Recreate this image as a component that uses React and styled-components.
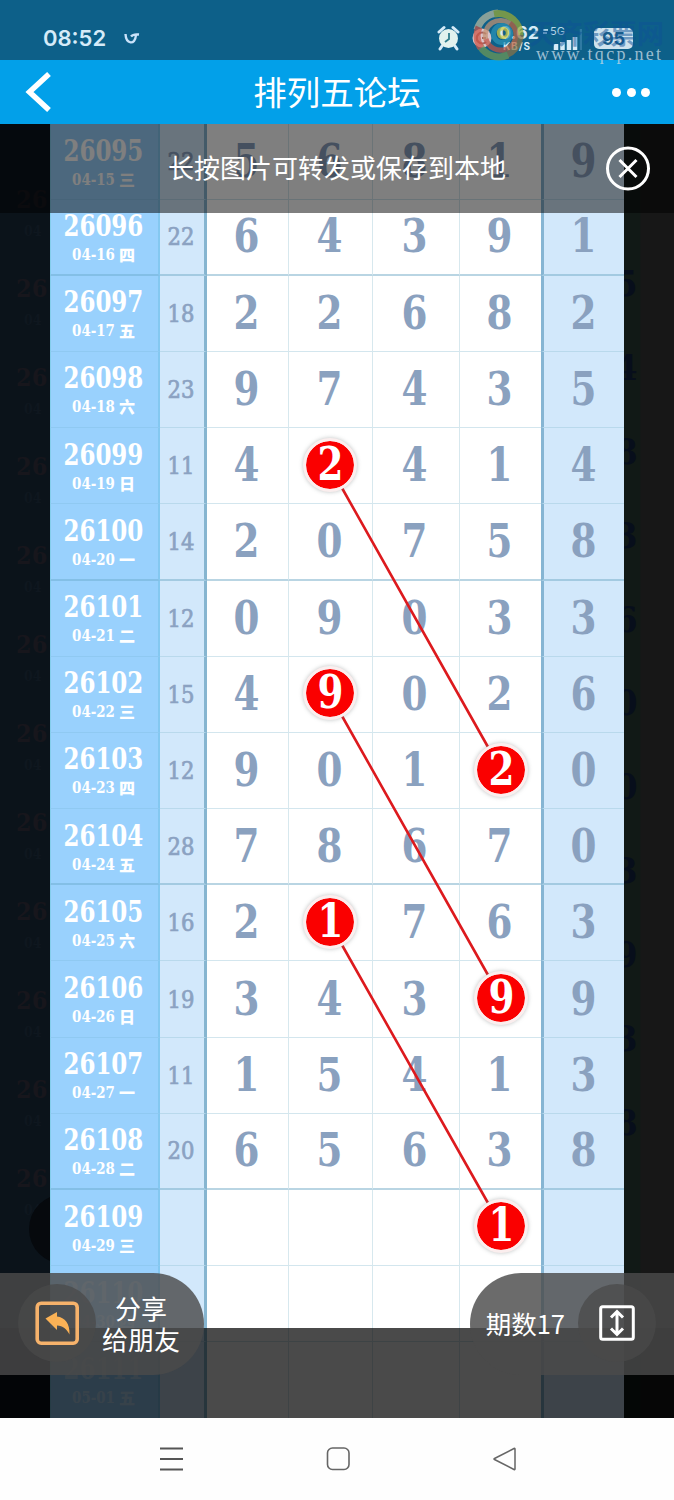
import React from "react";
import styled, { createGlobalStyle } from "styled-components";

const GlobalStyle = createGlobalStyle`
  * { box-sizing: border-box; }
  body { margin: 0; background: #fff; }
`;

const SERIF = `"DejaVu Serif Condensed", "DejaVu Serif", "Noto Sans CJK SC", serif`;
const SANS = `"Noto Sans", "Noto Sans CJK SC", sans-serif`;

const Phone = styled.div`
  width: 674px;
  height: 1500px;
  display: flex;
  flex-direction: column;
  position: relative;
  overflow: hidden;
  font-family: ${SANS};
`;

const StatusBar = styled.div`
  height: 60px;
  flex: none;
  display: flex;
  align-items: flex-end;
  justify-content: space-between;
  padding: 0 41px 7px 43px;
  background: #0d6089;
  color: #d5ebf8;
`;

const StatusGroup = styled.div`
  display: flex;
  align-items: center;
  gap: ${(p) => p.$gap}px;
  height: 30px;
`;

const Clock = styled.span`
  font: 600 22px/30px Inter, sans-serif;
`;

const CarrierIcon = styled.svg`
  margin-left: 3px;
`;

const NetSpeed = styled.div`
  width: 36px;
  text-align: center;
  font: 700 18px/16px Inter, sans-serif;
  small {
    display: block;
    font-size: 10px;
    line-height: 10px;
    letter-spacing: 1px;
  }
`;

const Battery = styled.div`
  width: 39px;
  height: 21px;
  margin-left: 5px;
  border-radius: 5px;
  background: #cfe3ee;
  color: #1b5f8c;
  font: 700 18px/21px Inter, sans-serif;
  text-align: center;
`;

const Watermark = styled.div`
  position: absolute;
  left: 472px;
  top: 8px;
  width: 202px;
  height: 56px;
`;

const WatermarkName = styled.div`
  position: absolute;
  left: 57px;
  top: 6px;
  font: 700 27px/38px "Noto Sans CJK SC", sans-serif;
  color: rgba(14, 82, 150, 0.5);
  white-space: nowrap;
`;

const WatermarkUrl = styled.div`
  position: absolute;
  left: 64px;
  top: 35px;
  font: 18px/22px "Liberation Serif", serif;
  letter-spacing: 2.3px;
  color: rgba(190, 214, 228, 0.8);
  white-space: nowrap;
`;

const Header = styled.header`
  height: 64px;
  flex: none;
  display: grid;
  grid-template-columns: 100px 1fr 100px;
  align-items: center;
  padding: 0 24px;
  background: #02a0e9;
  color: #fff;
`;

const Title = styled.h1`
  margin: 0;
  padding-bottom: 2px;
  text-align: center;
  font: 400 33.5px/60px "Noto Sans CJK SC", sans-serif;
`;

const Dots = styled.div`
  display: flex;
  justify-content: flex-end;
  gap: 5.5px;
  i {
    width: 9px;
    height: 9px;
    border-radius: 50%;
    background: #fff;
  }
`;

const Stage = styled.main`
  height: 1293.5px;
  flex: none;
  display: grid;
  grid-template-columns: 50px 574px 50px;
  position: relative;
  overflow: hidden;
  background: #000;
`;

const Backdrop = styled.div`
  background: ${(p) => p.$color};
  padding-top: ${(p) => p.$top}px;
  display: flex;
  flex-direction: column;
  overflow: hidden;
  font-family: ${SERIF};
  font-weight: 700;
  position: relative;
`;

const GhostPeriod = styled.div`
  height: 89px;
  flex: none;
  padding-left: 16px;
  font-size: 25px;
  line-height: 32px;
  color: #17161c;
  small {
    display: block;
    padding-left: 8px;
    font-size: 14px;
    line-height: 30px;
    color: #0f171f;
  }
`;

const GhostDigit = styled.div`
  height: 83.9px;
  flex: none;
  margin-left: -9px;
  font-size: 36px;
  line-height: 84px;
  color: #070e1b;
`;

const GhostKnob = styled.div`
  position: absolute;
  left: 29px;
  top: 1070px;
  width: 70px;
  height: 70px;
  border-radius: 50%;
  background: #06090d;
`;

const Sheet = styled.section`
  height: 1296px;
  position: relative;
  background: #fff;
  font-family: ${SERIF};
  font-weight: 700;
`;

const Row = styled.div`
  height: 76.2px;
  display: grid;
  grid-template-columns: 110px 47px 81px 83.5px 87.5px 82px 83px;
  &:first-child { height: 75.6px; }
`;

const line = (p) =>
  p.$heavy ? "2.5px solid rgba(115, 172, 200, 0.5)" : "1.5px solid rgba(150, 196, 215, 0.42)";

const Period = styled.div`
  display: flex;
  flex-direction: column;
  align-items: center;
  padding: 11.5px 2px 0 0;
  background: #99d1fd;
  border-left: 1px solid #84cdec;
  border-right: 2px solid #84c8f0;
  border-bottom: ${(p) => (p.$heavy ? "2.5px solid #83bfe6" : "1px solid #8fc9f2")};
  color: ${(p) => (p.$faint ? "rgba(255, 255, 255, 0.4)" : "#fff")};
  white-space: nowrap;
`;

const Issue = styled.div`
  font-size: 29px;
  line-height: 30px;
  transform: scaleX(0.88);
`;

const DateLine = styled.div`
  display: flex;
  align-items: center;
  gap: 4px;
  font-size: 16px;
  line-height: 28px;
  span {
    padding-bottom: 2px;
    line-height: 26px;
    font-family: "Noto Sans CJK SC", sans-serif;
    font-size: 16px;
    font-weight: 900;
  }
  b {
    width: 43px;
    display: flex;
    justify-content: center;
    transform: scaleX(0.93);
  }
`;

const Sum = styled.div`
  display: flex;
  align-items: center;
  justify-content: center;
  padding-right: 1px;
  background: #d2e8fb;
  border-right: 3px solid #86b5d0;
  border-bottom: ${line};
  color: #8ba2c2;
  font-weight: 400;
  font-size: 24.5px;
  -webkit-text-stroke: 0.7px #8ba2c2;
  span { transform: scaleX(0.96); }
`;

const Digit = styled.div`
  display: flex;
  align-items: center;
  justify-content: center;
  padding: 0 2px 1px 0;
  background: ${(p) => (p.$last ? "#d2e8fb" : "#fff")};
  border-left: ${(p) => (p.$last ? "3.5px solid #86b5d3" : p.$first ? "none" : "1.5px solid #d7e8ee")};
  border-bottom: ${line};
  color: #8aa1bf;
  font-size: 46px;
  line-height: 60px;
  span { transform: scaleX(0.9); }
`;

const Marks = styled.svg`
  position: absolute;
  left: 0;
  top: -1px;
`;

const Ball = styled.div`
  position: absolute;
  left: ${(p) => p.$x - 27}px;
  top: ${(p) => p.$y - 28}px;
  width: 54px;
  height: 54px;
  border-radius: 50%;
  border: 3.5px solid #fbeeee;
  background: #fa0000;
  background-clip: padding-box;
  box-shadow: 0 0 4px rgba(110, 120, 120, 0.45);
  color: #fff;
  display: flex;
  align-items: center;
  justify-content: center;
  padding-bottom: 2px;
  font-size: 46px;
  line-height: 46px;
  span { transform: scaleX(0.9); }
`;

const Shade = styled.div`
  position: absolute;
  left: 0;
  right: 0;
  top: 1204px;
  bottom: 0;
  background: rgba(0, 0, 0, 0.71);
`;

const Tip = styled.div`
  position: absolute;
  inset: 0 0 auto 0;
  height: 89px;
  display: flex;
  align-items: center;
  justify-content: center;
  padding-bottom: 3px;
  background: rgba(0, 0, 0, 0.5);
  color: #fff;
  font: 400 26px/36px "Noto Sans CJK SC", sans-serif;
`;

const CloseIcon = styled.svg`
  position: absolute;
  left: 605px;
  top: 21px;
`;

const Pill = styled.div`
  position: absolute;
  top: 1149px;
  height: 102px;
  width: 204px;
  display: flex;
  align-items: center;
  padding-bottom: 3px;
  background: rgba(75, 75, 75, 0.82);
  color: #fff;
  font: 400 26px/31px "Noto Sans CJK SC", sans-serif;
  ${(p) =>
    p.$side === "left"
      ? "left: 0; padding-left: 18px; border-radius: 0 51px 51px 0;"
      : "right: 0; padding-right: 18px; border-radius: 51px 0 0 51px; justify-content: flex-end; font-size: 25.5px;"}
`;

const PillLabel = styled.div`
  text-align: center;
  white-space: nowrap;
  padding: ${(p) => p.$pad};
`;

const Knob = styled.div`
  width: 78px;
  height: 78px;
  flex: none;
  border-radius: 50%;
  background: rgba(74, 74, 74, 0.75);
  display: flex;
  align-items: center;
  justify-content: center;
`;

const NavBar = styled.nav`
  flex: 1;
  display: flex;
  justify-content: center;
  gap: 141px;
  align-items: center;
  padding-left: 2px;
  background: #fefefe;
`;

const DAYS = "三四五六日一二";

const DRAWS = [
  ["26095", "04-15", "22", "56819"],
  ["26096", "04-16", "22", "64391"],
  ["26097", "04-17", "18", "22682"],
  ["26098", "04-18", "23", "97435"],
  ["26099", "04-19", "11", "42414"],
  ["26100", "04-20", "14", "20758"],
  ["26101", "04-21", "12", "09033"],
  ["26102", "04-22", "15", "49026"],
  ["26103", "04-23", "12", "90120"],
  ["26104", "04-24", "28", "78670"],
  ["26105", "04-25", "16", "21763"],
  ["26106", "04-26", "19", "34399"],
  ["26107", "04-27", "11", "15413"],
  ["26108", "04-28", "20", "65638"],
  ["26109", "04-29", "", "     "],
  ["26110", "04-30", "", "     "],
  ["26111", "05-01", "", "     "],
];

const BALLS = [
  [280, 342, "2"],
  [451, 647, "2"],
  [280, 570, "9"],
  [451, 875, "9"],
  [280, 799, "1"],
  [451, 1103, "1"],
];

const GHOST_ROWS = 12;
const GHOST_DIGITS = "54836003938";

function StatusIcons() {
  return (
    <StatusGroup $gap={7}>
      <svg width="25" height="26" viewBox="0 0 25 26" fill="none">
        <path d="M2 7 7 2.5M21 7 16 2.5M5 21l-2 3M18 21l2 3" stroke="#d5ebf8" strokeWidth="3" strokeLinecap="round" />
        <circle cx="11.500" cy="13.500" r="9.500" fill="#e2f2ee" />
        <path d="M12 8v6l-4 3" stroke="#2f7d8c" strokeWidth="1.800" />
      </svg>
      <CarrierIcon width="20" height="24" viewBox="0 0 20 24" fill="none">
        <circle cx="10" cy="12" r="9.500" fill="#dbc4c9" />
        <path d="M14 8a5.500 5.500 0 1 0 0 8M10 12h4" stroke="#a5625f" strokeWidth="2.200" />
      </CarrierIcon>
      <NetSpeed>
        0.62
        <small>KB/S</small>
      </NetSpeed>
      <svg width="40" height="28" viewBox="0 0 40 28">
        <path d="M1 6h5M1 9h4" stroke="#a9cfe2" strokeWidth="2" />
        <text x="8" y="11" fill="#b7d8e8" fontSize="11" fontFamily="Inter, sans-serif">5G</text>
        <path d="M14 26v-6M20.500 26v-8M27 26v-10M33 26v-13" stroke="#d5ebf8" strokeWidth="4.500" />
        <path d="M39 26V5" stroke="#2f7aa3" strokeWidth="2.500" />
      </svg>
      <Battery>95</Battery>
    </StatusGroup>
  );
}

export default function App() {
  return (
    <Phone>
      <GlobalStyle />
      <StatusBar>
        <StatusGroup $gap={18}>
          <Clock>08:52</Clock>
          <svg width="16" height="13" viewBox="0 0 16 13" fill="none" stroke="#c9e2fa" strokeWidth="2.400">
            <path d="M1.500 2C2 12 11 14 12 3M7 4.500C9 2 11 2 15 2.500" />
          </svg>
        </StatusGroup>
        <StatusIcons />
      </StatusBar>

      <Header>
        <svg width="28" height="40" viewBox="0 0 28 40" fill="none" stroke="#fff" strokeWidth="5.500">
          <path d="M25 2 5.500 20 25 38" />
        </svg>
        <Title>排列五论坛</Title>
        <Dots>
          <i />
          <i />
          <i />
        </Dots>
      </Header>

      <Stage>
        <Backdrop $color="#0b131a" $top={60}>
          {Array.from({ length: GHOST_ROWS }, (_, i) => (
            <GhostPeriod key={i}>
              26
              <small>04</small>
            </GhostPeriod>
          ))}
          <GhostKnob />
        </Backdrop>

        <Sheet>
          {DRAWS.map(([issue, date, sum, digits], r) => {
            const heavy = r % 4 === 1;
            return (
              <Row key={issue}>
                <Period $heavy={heavy} $faint={r > 14}>
                  <Issue>{issue}</Issue>
                  <DateLine>
                    <b>{date}</b>
                    <span>{DAYS[r % 7]}</span>
                  </DateLine>
                </Period>
                <Sum $heavy={heavy}>
                  <span>{sum}</span>
                </Sum>
                {digits.split("").map((d, c) => (
                  <Digit key={c} $heavy={heavy} $first={c === 0} $last={c === 4}>
                    <span>{d}</span>
                  </Digit>
                ))}
              </Row>
            );
          })}
          <Marks width="574" height="1296" stroke="#dd1a1e" strokeWidth="2.600">
            <path d="M292 365 438 624M292 593 438 852M292 822 438 1080" />
          </Marks>
          {BALLS.map(([x, y, n]) => (
            <Ball key={x + "-" + y} $x={x} $y={y}>
              <span>{n}</span>
            </Ball>
          ))}
        </Sheet>

        <Backdrop $color="linear-gradient(90deg, #111916 16px, #171717 17px)" $top={117}>
          {GHOST_DIGITS.split("").map((d, i) => (
            <GhostDigit key={i}>{d}</GhostDigit>
          ))}
        </Backdrop>

        <Shade />
        <Tip>长按图片可转发或保存到本地</Tip>
        <CloseIcon width="46" height="46" viewBox="0 0 46 46" fill="none" stroke="#fff" strokeWidth="3">
          <circle cx="23" cy="23.500" r="20.500" />
          <path d="m14.500 15 17 17M31.500 15l-17 17" />
        </CloseIcon>

        <Pill $side="left">
          <Knob>
            <svg width="44" height="44" viewBox="0 0 44 44">
              <rect x="2.200" y="2.200" width="40" height="40" rx="4" fill="none" stroke="#f6b26b" strokeWidth="3.600" />
              <path d="M10.500 17.500 22 11v4.500c8 1 13 7 12.500 18-3-6-6.500-8.500-12.500-9V29z" fill="#fbb256" />
            </svg>
          </Knob>
          <PillLabel $pad="0 0 0 6px">
            分享
            <br />
            给朋友
          </PillLabel>
        </Pill>

        <Pill $side="right">
          <PillLabel $pad="0 13px 0 0">期数17</PillLabel>
          <Knob>
            <svg width="36" height="36" viewBox="0 0 36 36" fill="none" stroke="#fff">
              <rect x="1.700" y="1.700" width="32.600" height="32.600" rx="2" strokeWidth="3" />
              <path d="M18 8v20M12 12.500l6-6 6 6M12 23.500l6 6 6-6" strokeWidth="3" />
            </svg>
          </Knob>
        </Pill>
      </Stage>

      <NavBar>
        <svg width="26" height="26" viewBox="0 0 26 26" stroke="#555" strokeWidth="1.800">
          <path d="M2 2.500h23M2 13h23M2 23.500h23" />
        </svg>
        <svg width="26" height="26" viewBox="0 0 26 26" fill="none" stroke="#666" strokeWidth="1.600">
          <rect x="2.500" y="2" width="21.500" height="21.500" rx="5" />
        </svg>
        <svg width="26" height="26" viewBox="0 0 26 26" fill="none" stroke="#666" strokeWidth="1.500" strokeLinejoin="round">
          <path d="M23 3v20q0 1-1 .5L2.500 13.500q-1-.5 0-1L22 2.500q1-.5 1 .5z" />
        </svg>
      </NavBar>

      <Watermark>
        <svg width="56" height="56" viewBox="0 0 56 56" fill="none" strokeWidth="7" opacity="0.72">
          <path d="M5 22A23 23 0 0 1 26 5" stroke="#b6b9a0" />
          <path d="M22 6A22 22 0 0 1 48 30" stroke="#9cab35" />
          <path d="M48 27A22 22 0 0 1 30 48" stroke="#8b7345" />
          <path d="M36 47A22 22 0 0 1 8 38" stroke="#6f9a55" />
          <path d="M9 40A22 22 0 0 1 7 19" stroke="#cc5648" />
          <path d="M14 32A15 15 0 0 1 38 16" stroke="#c39272" strokeWidth="5" />
          <path d="M38 15A15 15 0 0 1 34 41" stroke="#c0643e" strokeWidth="5" />
          <path d="M34 41A15 15 0 0 1 14 31" stroke="#c25346" strokeWidth="5" />
          <circle cx="30" cy="26" r="8.500" stroke="#2c94b8" strokeWidth="5" />
          <circle cx="31" cy="25" r="4.500" stroke="#d3ca3e" strokeWidth="3.500" />
        </svg>
        <WatermarkName>天齐彩票网</WatermarkName>
        <WatermarkUrl>www.tqcp.net</WatermarkUrl>
      </Watermark>
    </Phone>
  );
}
